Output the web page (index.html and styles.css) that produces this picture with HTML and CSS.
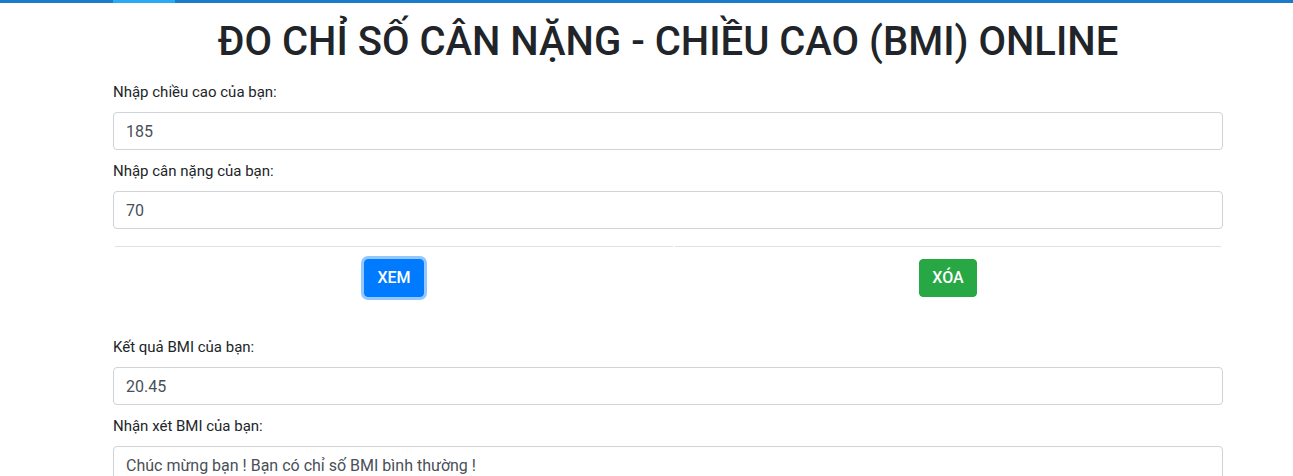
FILE: index.html
```html
<!DOCTYPE html>
<html lang="vi">
<head>
<meta charset="utf-8">
<title>Đo chỉ số BMI</title>
<link rel="stylesheet" href="styles.css">
</head>
<body>
<div class="topbar"><div class="seg-dark seg-first"></div><div class="seg-light"></div><div class="seg-dark seg-rest"></div></div>
<main class="container">
  <h1 class="title">ĐO CHỈ SỐ CÂN NẶNG - CHIỀU CAO (BMI) ONLINE</h1>
  <div class="form-group">
    <label class="label">Nhập chiều cao của bạn:</label>
    <input class="input" type="text" value="185">
  </div>
  <div class="form-group">
    <label class="label">Nhập cân nặng của bạn:</label>
    <input class="input" type="text" value="70">
  </div>
  <div class="actions">
    <div class="cell cell-left"><button class="btn btn-primary">XEM</button></div>
    <div class="cell cell-right"><button class="btn btn-success">XÓA</button></div>
  </div>
  <div class="form-group">
    <label class="label">Kết quả BMI của bạn:</label>
    <input class="input" type="text" value="20.45" readonly>
  </div>
  <div class="form-group">
    <label class="label">Nhận xét BMI của bạn:</label>
    <input class="input" type="text" value="Chúc mừng bạn ! Bạn có chỉ số BMI bình thường !" readonly>
  </div>
</main>
</body>
</html>
```
FILE: styles.css
```css
* { box-sizing: border-box; }
html, body { margin: 0; padding: 0; background: #fff; }
body {
  font-family: Roboto, "Noto Sans", Arial, sans-serif;
  font-size: 16px;
  line-height: 1.5;
  color: #212529;
}
.topbar { display: flex; height: 3px; }
.seg-dark { background: #1b7bc9; }
.seg-first { width: 113px; }
.seg-light { width: 62px; background: #29aaf4; }
.seg-rest { flex: 1; }
.container { width: 1110px; margin-left: 113px; }
.title {
  margin: 15px 0 14px;
  font-size: 40px;
  font-weight: 500;
  line-height: 1.2;
  text-align: center;
  color: #212529;
}
.form-group { display: flex; flex-direction: column; margin-bottom: 9px; }
.label { display: block; font-size: 15px; line-height: 24px; margin-bottom: 8px; }
.input {
  display: block;
  width: 100%;
  height: 38px;
  padding: 6px 12px;
  font-family: inherit;
  font-size: 16px;
  line-height: 1.5;
  color: #495057;
  background: #fff;
  border: 1px solid #ced4da;
  border-radius: 4px;
  outline: none;
}
.actions {
  display: grid;
  grid-template-columns: 558px 546px;
  column-gap: 2px;
  padding: 2px 2px 0;
  margin-top: 15px;
  margin-bottom: 26px;
}
.cell {
  border-top: 1px solid #dee2e6;
  padding: 12px;
  display: flex;
  justify-content: center;
}
.btn {
  font-family: inherit;
  font-size: 16px;
  font-weight: 500;
  line-height: 24px;
  padding: 6px 12px;
  border: 1px solid transparent;
  border-radius: 4px;
  color: #fff;
  cursor: pointer;
}
.btn-primary { background: #007bff; border-color: #007bff; box-shadow: 0 0 0 3px rgba(38,143,255,.5); }
.btn-success { background: #28a745; border-color: #28a745; }
```
